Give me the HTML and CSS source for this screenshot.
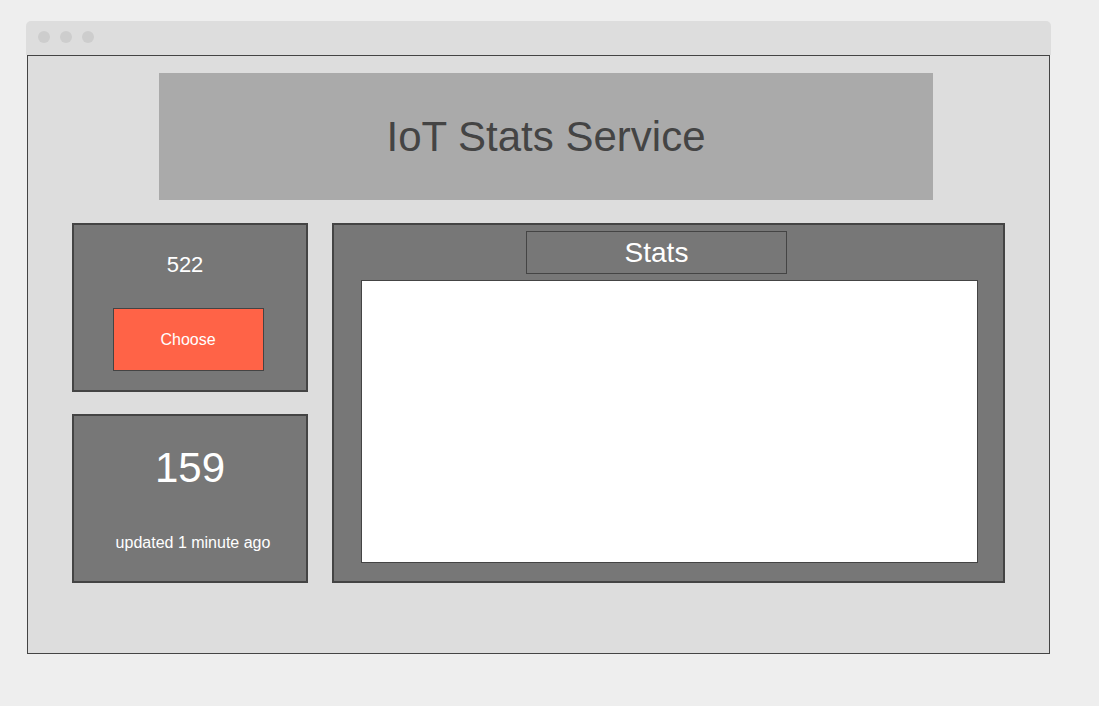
FILE: index.html
```html
<!DOCTYPE html>
<html>
<head>
<meta charset="utf-8">
<link rel="stylesheet" href="styles.css">
</head>
<body>
<div class="window">
  <div class="titlebar">
    <span class="dot"></span><span class="dot"></span><span class="dot"></span>
  </div>
  <div class="frame">
    <div class="header">IoT Stats Service</div>
    <div class="row">
      <div class="col">
        <div class="card card-choose">
          <div class="num-small">522</div>
          <div class="btn">Choose</div>
        </div>
        <div class="card card-count">
          <div class="num-big">159</div>
          <div class="updated">updated 1 minute ago</div>
        </div>
      </div>
      <div class="stats">
        <div class="stats-title">Stats</div>
        <div class="stats-area"></div>
      </div>
    </div>
  </div>
</div>
</body>
</html>
```
FILE: styles.css
```css
* { box-sizing: border-box; }
html, body { margin: 0; padding: 0; }
body {
  background: #eeeeee;
  font-family: "Liberation Sans", Arial, sans-serif;
  width: 1099px;
  height: 706px;
  overflow: hidden;
}
.window {
  margin: 21px 0 0 26px;
  width: 1025px;
}
.titlebar {
  height: 34px;
  background: #dddddd;
  border-radius: 5px 5px 0 0;
  display: flex;
  align-items: center;
  gap: 10px;
  padding-left: 12px;
  padding-bottom: 2px;
}
.dot {
  width: 12px;
  height: 12px;
  border-radius: 50%;
  background: #cdcdcd;
}
.frame {
  margin-left: 1px;
  width: 1023px;
  height: 599px;
  background: #dddddd;
  border: 1px solid #444444;
  padding: 17px 0 0 0;
}
.header {
  margin-left: 131px;
  width: 774px;
  height: 127px;
  background: #aaaaaa;
  color: #444444;
  font-size: 42px;
  display: flex;
  align-items: center;
  justify-content: center;
}
.row {
  display: flex;
  margin-top: 23px;
  margin-left: 44px;
  gap: 24px;
}
.col {
  display: flex;
  flex-direction: column;
  gap: 22px;
}
.card {
  width: 236px;
  height: 169px;
  background: #777777;
  border: 2px solid #444444;
  color: #ffffff;
  display: flex;
  flex-direction: column;
  align-items: center;
}
.card-choose { padding-top: 29px; }
.num-small {
  font-size: 22px;
  line-height: 22px;
  margin-left: -10px;
}
.btn {
  margin-top: 32px;
  margin-left: -4px;
  width: 151px;
  height: 63px;
  background: #ff6347;
  border: 1px solid #444444;
  font-size: 16px;
  padding-top: 1px;
  display: flex;
  align-items: center;
  justify-content: center;
}
.card-count { padding-top: 31px; }
.num-big {
  font-size: 42px;
  line-height: 42px;
}
.updated {
  margin-top: 46px;
  font-size: 16px;
  line-height: 16px;
  margin-left: 6px;
}
.stats {
  width: 673px;
  height: 360px;
  background: #777777;
  border: 2px solid #444444;
  padding-top: 6px;
}
.stats-title {
  margin-left: 192px;
  width: 261px;
  height: 43px;
  border: 1px solid #444444;
  color: #ffffff;
  font-size: 28px;
  padding-top: 1px;
  display: flex;
  align-items: center;
  justify-content: center;
}
.stats-area {
  margin-top: 6px;
  margin-left: 27px;
  width: 617px;
  height: 283px;
  background: #ffffff;
  border: 1px solid #444444;
}
```
